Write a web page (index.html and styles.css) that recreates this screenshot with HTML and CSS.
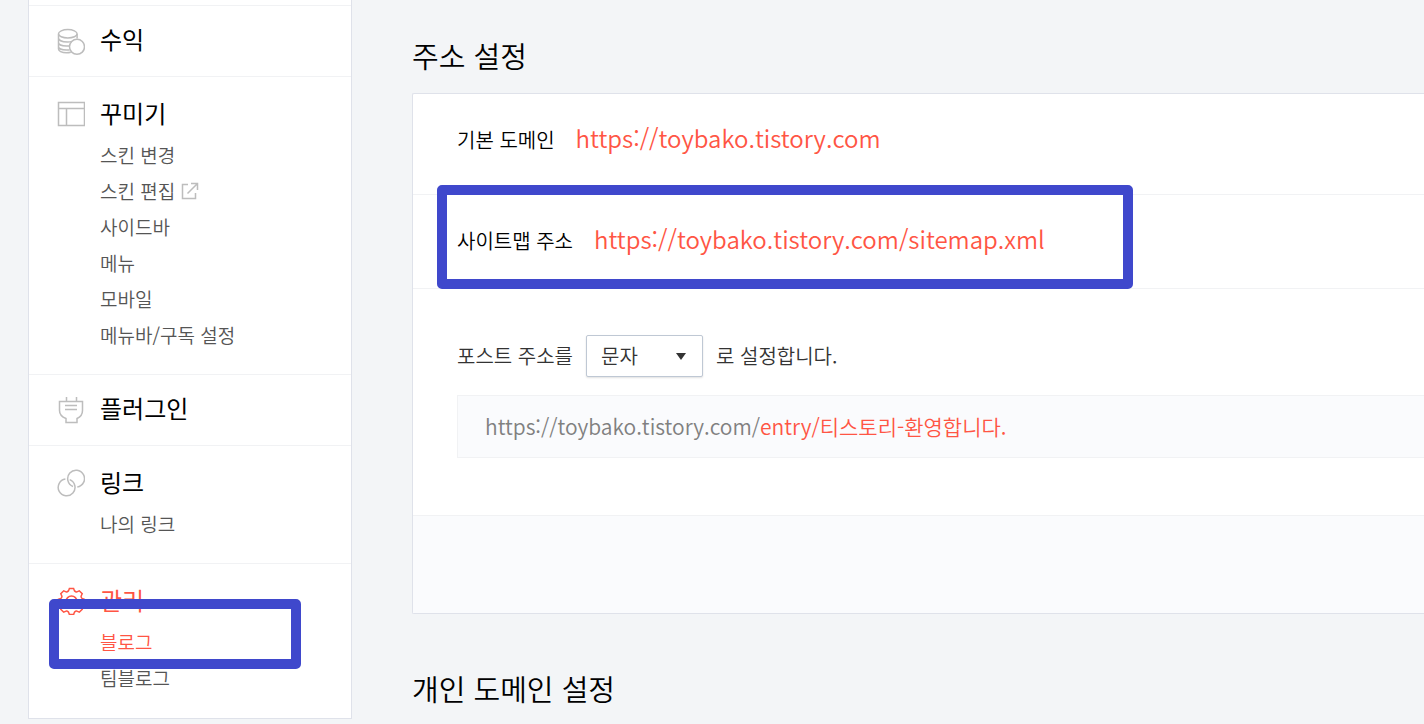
FILE: index.html
```html
<!DOCTYPE html>
<html lang="ko">
<head>
  <meta charset="UTF-8">
  <meta name="viewport" content="width=device-width, initial-scale=1.0">
  <title>블로그 관리</title>
  <link rel="stylesheet" href="styles.css">
</head>
<body>
  <div class="page">
    <!-- Sidebar -->
    <nav class="sidebar">
      <section class="menu menu-single">
        <h2 class="menu-title">
          <svg class="icon" viewBox="0 0 28 28">
            <ellipse cx="10.800" cy="5.800" rx="9.300" ry="4.200"/>
            <path d="M1.500 6v4c0 2 3 4 9 4 2 0 3.500-.2 4.500-.6M1.500 10v4.500c0 1.800 3 3.500 8 3.500h2.500M1.500 14.500v4c0 1.800 3 3.500 8 3.500h3M1.500 18.500v2.500c0 1.800 3 3.800 8 3.800 2 0 3.200-.2 4.300-.5M20.100 6v4.500"/>
            <circle cx="20" cy="18.800" r="7.500"/>
          </svg>
          <a href="#">수익</a>
        </h2>
      </section>

      <section class="menu">
        <h2 class="menu-title">
          <svg class="icon" viewBox="0 0 28 28">
            <path d="M1.500 2.500h26v23h-26zM1.500 8.500h26M9.500 8.500v17"/>
          </svg>
          <a href="#">꾸미기</a>
        </h2>
        <ul class="submenu">
          <li><a href="#">스킨 변경</a></li>
          <li>
            <a href="#">스킨 편집</a>
            <svg class="icon-out" viewBox="0 0 18 18">
              <path d="M7 2.500H1.500v14h13V11M10 1.500h6.500V8M16 2L6.500 11.500"/>
            </svg>
          </li>
          <li><a href="#">사이드바</a></li>
          <li><a href="#">메뉴</a></li>
          <li><a href="#">모바일</a></li>
          <li><a href="#">메뉴바/구독 설정</a></li>
        </ul>
      </section>

      <section class="menu menu-single">
        <h2 class="menu-title">
          <svg class="icon" viewBox="0 0 28 28">
            <path d="M9.500 0v4.500M19.500 0v4.500M2.500 4.500h23v9c0 4-2 6.500-5.500 8v4h-11v-4c-4-1.500-6.500-4-6.500-8zM8 8.500h12M8 12.500h12"/>
          </svg>
          <a href="#">플러그인</a>
        </h2>
      </section>

      <section class="menu">
        <h2 class="menu-title">
          <svg class="icon" viewBox="0 0 28 28">
            <path d="M8.400 10.100A8.400 8.400 0 1 0 12.700 10.600M20.300 18A8.400 8.400 0 1 0 16 17.500"/>
          </svg>
          <a href="#">링크</a>
        </h2>
        <ul class="submenu">
          <li><a href="#">나의 링크</a></li>
        </ul>
      </section>

      <section class="menu menu-active">
        <h2 class="menu-title">
          <svg class="icon" viewBox="-14.500 -14.500 28 28">
            <path d="M-2.100-13.100H2.100L3-10.600Q4.200-9.400 5.400-9.600L7.800-10.700 10.700-7.800 9.600-5.400Q9.400-4.200 10.600-3L13.100-2.100V2.100L10.600 3Q9.400 4.200 9.600 5.400L10.700 7.800 7.800 10.700 5.400 9.600Q4.200 9.400 3 10.600L2.100 13.100H-2.100L-3 10.600Q-4.200 9.400-5.400 9.600L-7.800 10.700-10.700 7.800-9.600 5.400Q-9.400 4.200-10.600 3L-13.100 2.100V-2.100L-10.600-3Q-9.400-4.200-9.600-5.400L-10.700-7.800-7.800-10.700-5.400-9.600Q-4.200-9.400-3-10.600z"/>
            <circle r="5.500"/>
          </svg>
          <a href="#">관리</a>
        </h2>
        <ul class="submenu">
          <li><a class="current" href="#">블로그</a></li>
          <li><a href="#">팀블로그</a></li>
        </ul>
        <div class="mark mark-blog"></div>
      </section>
    </nav>

    <!-- Settings -->
    <main class="content">
      <h1 class="heading">주소 설정</h1>
      <div class="panel">
        <div class="row row-domain">
          <span class="label">기본 도메인</span>
          <a class="url" href="#">https://toybako.tistory.com</a>
        </div>

        <div class="row row-sitemap">
          <span class="label">사이트맵 주소</span>
          <a class="url" href="#">https://toybako.tistory.com/sitemap.xml</a>
          <div class="mark mark-sitemap"></div>
        </div>

        <div class="post">
          <div class="post-line">
            <label for="postUrl">포스트 주소를</label>
            <div class="select-wrap">
              <select id="postUrl">
                <option>문자</option>
                <option>숫자</option>
              </select>
            </div>
            <span>로 설정합니다.</span>
          </div>
          <p class="preview">https://toybako.tistory.com/<span class="entry">entry/티스토리-환영합니다.</span></p>
        </div>

        <div class="panel-foot"></div>
      </div>

      <h1 class="heading heading-second">개인 도메인 설정</h1>
    </main>
  </div>
</body>
</html>
```
FILE: styles.css
```css
* {
  box-sizing: border-box;
}

body {
  margin: 0;
  background: #f3f5f7;
  color: #333;
  font-family: "Noto Sans CJK KR", sans-serif;
  font-size: 20px;
  font-weight: 350;
}

h1, h2, ul, p {
  margin: 0;
  padding: 0;
}

a {
  color: inherit;
  text-decoration: none;
}

.page {
  display: flex;
  align-items: flex-start;
  gap: 60px;
  padding-left: 28px;
}

/* Sidebar */
.sidebar {
  flex: 0 0 324px;
  padding: 5px 0 1px;
  background: #fff;
  border: 1px solid #dfe2ea;
  border-top: 0;
}

.menu {
  position: relative;
  padding: 20px 28px 21px;
  border-top: 1px solid #f1f2f4;
}

.menu-single {
  padding: 17px 28px 19px;
}

.menu-title {
  display: flex;
  align-items: flex-start;
  gap: 15px;
  height: 34px;
  color: #000;
  font-size: 24px;
  font-weight: 400;
  line-height: 32px;
}

.icon {
  width: 28px;
  height: 28px;
  margin-top: 3px;
  fill: none;
  stroke: #bdbdbd;
  stroke-width: 1.5;
}

.menu-single .icon {
  margin-top: 5px;
}

.submenu {
  margin-top: 6px;
  padding-left: 43px;
  list-style: none;
  color: #555;
  font-size: 19px;
  line-height: 36px;
}

.submenu li {
  display: flex;
  align-items: center;
  gap: 6px;
  height: 36px;
}

.icon-out {
  width: 18px;
  height: 18px;
  fill: none;
  stroke: #bdbdbd;
  stroke-width: 1.5;
}

.menu-active .menu-title,
.current {
  color: #ff5544;
}

.menu-active .icon {
  stroke: #ff5544;
}

/* Content */
.content {
  flex: 1;
  min-width: 0;
}

.heading {
  padding: 34px 0 17px;
  color: #000;
  font-size: 29px;
  font-weight: 350;
  line-height: 42px;
}

.heading-second {
  padding: 53px 0 0;
}

.panel {
  background: #fff;
  border: 1px solid #dfe2ea;
  border-right: 0;
  border-radius: 2px 0 0 2px;
}

.row {
  position: relative;
  display: flex;
  align-items: baseline;
  gap: 21px;
  padding: 24px 44px 34px;
  border-bottom: 1px solid #f1f2f4;
  line-height: 40px;
}

.row-sitemap {
  padding-bottom: 27px;
}

.label {
  color: #000;
}

.url {
  color: #ff5544;
  font-size: 24px;
}

.post {
  padding: 46px 0 57px 44px;
  border-bottom: 1px solid #f1f2f4;
}

.post-line {
  display: flex;
  align-items: center;
  gap: 13px;
  line-height: 40px;
}

.select-wrap {
  position: relative;
}

.select-wrap::after {
  content: "";
  position: absolute;
  top: 18px;
  right: 17px;
  border: 5px solid transparent;
  border-top: 7px solid #333;
  border-bottom: 0;
  pointer-events: none;
}

select {
  display: block;
  width: 117px;
  height: 42px;
  padding: 0 14px;
  appearance: none;
  background: #fff;
  border: 1px solid #bfc8d4;
  border-radius: 2px;
  box-shadow: 0 1px 2px rgba(0, 0, 0, 0.12);
  color: #333;
  font: inherit;
}

.preview {
  margin-top: 18px;
  padding: 0 27px;
  background: #fafbfd;
  border: 1px solid #f1f2f4;
  border-right: 0;
  color: #808080;
  font-size: 21px;
  line-height: 61px;
}

.entry {
  color: #ff5544;
}

.panel-foot {
  height: 97px;
  background: #fafbfd;
}

/* Blue marker boxes */
.mark {
  position: absolute;
  border: 10px solid #3f48cc;
  border-radius: 5px;
  pointer-events: none;
}

.mark-blog {
  top: 35px;
  left: 20px;
  width: 252px;
  height: 70px;
}

.mark-sitemap {
  top: -10px;
  left: 24px;
  width: 696px;
  height: 104px;
}
```
